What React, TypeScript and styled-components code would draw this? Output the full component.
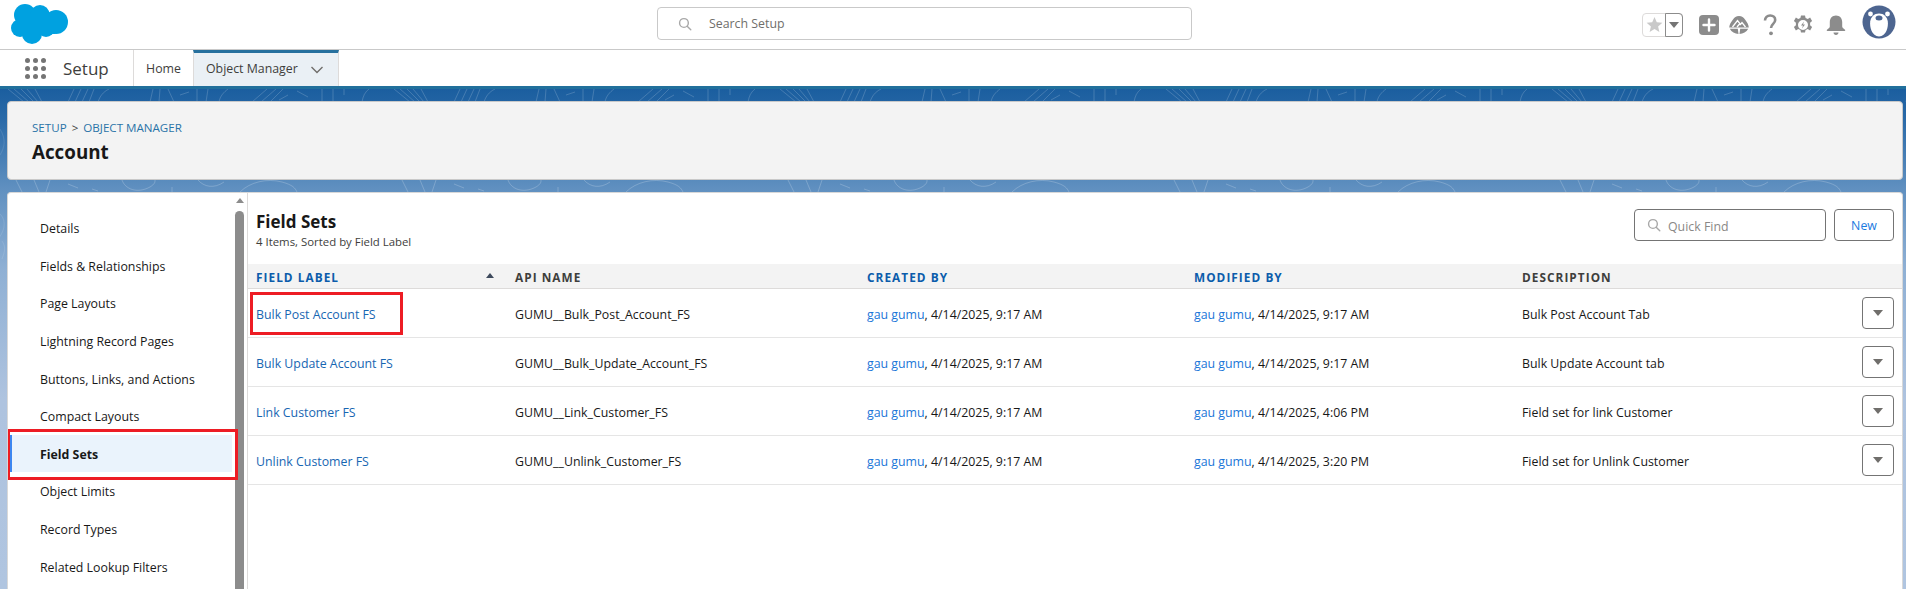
import React from "react";
import styled, { createGlobalStyle } from "styled-components";

const FONT = `"Open Sans", "Noto Sans", "Liberation Sans", sans-serif`;

const Global = createGlobalStyle`
  html, body { margin: 0; padding: 0; height: 100%; overflow: hidden; background: #fff; }
  body { font-family: ${FONT}; font-size: 12.35px; color: #181818; }
  #root { height: 100%; }
  * { box-sizing: border-box; }
`;

const wave = encodeURIComponent(`<svg xmlns="http://www.w3.org/2000/svg" width="386" height="180" fill="none" stroke="#fff" stroke-width="1"><g stroke-opacity=".17"><path d="M8 0l16 13M14 0l15 13M21 0l13 13M27 0l11 13M35 0l7 13M68 13l6-13M75 13l6-13M82 13l6-13M89 13l5-13M98 13c2-6 5-10 11-13"/><path d="M150 13l3-13M159 13l1-13M168 0l6 13M180 6l9-3M197 0v13M208 0l-2 13M219 13c1-6 5-10 9-13M252 13l15-13M261 13l15-13M270 13l13-13M279 11l9-5M297 2l11 6M322 0v13M333 0v13M344 0v6M362 13c1-6 3-10 7-13"/></g><g stroke-opacity=".2"><path d="M16 91l6 12M34 91l5 12M50 91l-4 12M68 95l10 4M92 100l6 2M122 91c3 9 15 14 28 7 5-3 5-5 5-7M172 98v7M198 91c6 7 16 9 26 2M240 103c10-10 27-14 42-10 11 3 13 6 15 10"/></g><g stroke-opacity=".1"><path d="M0 125c8 8 3 20-3 26M0 40c6 10 5 18 0 26"/><path d="M2 170c3-8 4-12 0-18"/></g></svg>`);

const Page = styled.div`
  width: 1906px;
  height: 589px;
  display: flex;
  flex-direction: column;
  overflow: hidden;
`;

const TopBar = styled.header`
  height: 50px;
  flex: none;
  background: #fff;
  border-bottom: 1px solid #c9c9c9;
  display: grid;
  grid-template-columns: 646px 535px 1fr;
  align-items: center;
  padding: 0 10px 0 11px;
`;

const LogoSvg = styled.svg`
  width: 58px;
  height: 41px;
  display: block;
  margin-top: -1px;
`;

const SearchBox = styled.div`
  height: 33px;
  margin-top: -2px;
  border: 1px solid #c9c9c9;
  border-radius: 4px;
  display: flex;
  align-items: center;
  padding-left: 20px;
  gap: 17px;
  color: #706e6b;
  font-size: 12.35px;
  background: #fff;
`;

const Tools = styled.div`
  display: flex;
  justify-content: flex-end;
  align-items: center;
`;

const FavGroup = styled.div`
  width: 41px;
  height: 24px;
  display: flex;
  border: 1px solid #dddbda;
  border-radius: 4px;
  margin-right: 14px;
  overflow: visible;
`;

const FavStar = styled.div`
  width: 22px;
  display: flex;
  align-items: center;
  justify-content: center;
`;

const FavCaret = styled.div`
  flex: 1;
  margin: -1px -1px -1px 0;
  border: 1px solid #8c8c8c;
  border-radius: 0 4px 4px 0;
  display: flex;
  align-items: center;
  justify-content: center;
`;

const ToolIcon = styled.svg<{ $gap?: number }>`
  width: 24px;
  height: 24px;
  display: block;
  margin-right: ${(p) => p.$gap ?? 8}px;
  color: #8c8c8c;
`;

const Avatar = styled.svg`
  width: 34px;
  height: 34px;
  margin-left: 8px;
  margin-top: -5px;
  display: block;
`;

const NavBar = styled.nav`
  height: 36px;
  flex: none;
  background: #fff;
  display: flex;
  align-items: stretch;
`;

const AppLauncher = styled.div`
  width: 134px;
  display: flex;
  align-items: center;
  padding-left: 25px;
  gap: 17px;
  border-right: 1px solid #dddbda;
`;

const Dots = styled.div`
  display: grid;
  grid-template-columns: repeat(3, 5px);
  grid-auto-rows: 5px;
  gap: 3px;
  span { background: #747474; border-radius: 50%; }
`;

const AppName = styled.span`
  font-size: 17px;
  color: #3e3e3c;
  line-height: 1;
`;

const HomeTab = styled.div`
  width: 59px;
  display: flex;
  align-items: center;
  justify-content: center;
  font-size: 12.35px;
  color: #3e3e3c;
`;

const ActiveTab = styled.div`
  width: 146px;
  background: #eaf0f5;
  border-top: 3px solid #26709e;
  border-left: 1px solid #dddbda;
  border-right: 1px solid #dddbda;
  display: flex;
  align-items: center;
  padding: 0 14px 3px 12px;
  justify-content: space-between;
  font-size: 12.35px;
  color: #3e3e3c;
  svg { margin-top: 3px; }
`;

const Stage = styled.main`
  flex: 1;
  min-height: 0;
  display: flex;
  flex-direction: column;
  gap: 12px;
  padding: 12px 3px 0 7px;
  border-top: 3px solid #21709c;
  background:
    url("data:image/svg+xml,${wave}") repeat-x 0 0,
    linear-gradient(180deg, #1b5e9f 0%, #2a6aa8 6%, #6090c0 20%, #8fb0d4 36%, #aec3df 62%, #b0c5e0 100%);
`;

const HeaderCard = styled.section`
  height: 79px;
  flex: none;
  background: #f3f3f3;
  border: 1px solid #c9c9c9;
  border-radius: 4px;
  padding: 18px 24px 0;
`;

const Crumbs = styled.div`
  font-size: 11.6px;
  line-height: 16px;
  color: #3e3e3c;
  display: flex;
  gap: 5px;
`;

const CrumbLink = styled.a`
  color: #2a73a8;
`;

const Title = styled.h1`
  margin: 4px 0 0;
  font-size: 18.8px;
  font-weight: 700;
  line-height: 24px;
  color: #181818;
`;

const Body = styled.section`
  flex: 1;
  min-height: 0;
  display: flex;
  background: #fff;
  border: 1px solid #d8d8d8;
  border-bottom: 0;
  border-radius: 4px 4px 0 0;
  overflow: hidden;
`;

const Side = styled.aside`
  width: 240px;
  flex: none;
  display: flex;
  border-right: 1px solid #dddbda;
  position: relative;
`;

const SideList = styled.ul`
  list-style: none;
  margin: 0;
  padding: 16px 0 0 2px;
  width: 226px;
  flex: none;
`;

const SideItem = styled.li<{ $active?: boolean }>`
  height: 37.6px;
  display: flex;
  align-items: center;
  padding: 2px 0 0 28px;
  margin-right: 2px;
  font-size: 12.35px;
  font-weight: ${(p) => (p.$active ? 700 : 400)};
  color: #181818;
  white-space: nowrap;
  background: ${(p) => (p.$active ? "#eaf3fc" : "transparent")};
  border-left: ${(p) => (p.$active ? "2px solid #3d86f0" : "2px solid transparent")};
  position: relative;
`;

const RedBox = styled.span<{ $w: number; $h: number; $x: number; $y: number }>`
  position: absolute;
  left: ${(p) => p.$x}px;
  top: ${(p) => p.$y}px;
  width: ${(p) => p.$w}px;
  height: ${(p) => p.$h}px;
  border: 3px solid #ed1c24;
  pointer-events: none;
  z-index: 2;
`;

const Scrollbar = styled.div`
  width: 9px;
  margin: 0 0 0 1px;
  flex: none;
  display: flex;
  flex-direction: column;
  align-items: center;
`;

const ScrollUp = styled.div`
  width: 0;
  height: 0;
  margin-top: 5px;
  border-left: 4.5px solid transparent;
  border-right: 4.5px solid transparent;
  border-bottom: 5px solid #8c8c8c;
`;

const ScrollThumb = styled.div`
  margin-top: 8px;
  flex: 1;
  width: 9px;
  background: #8c8c8c;
  border-radius: 5px 5px 0 0;
`;

const Main = styled.div`
  flex: 1;
  min-width: 0;
  display: flex;
  flex-direction: column;
`;

const ListHead = styled.div`
  height: 71px;
  flex: none;
  display: flex;
  justify-content: space-between;
  padding: 16px 8px 0 8px;
`;

const ListTitle = styled.h2`
  margin: 1px 0 0;
  font-size: 17px;
  line-height: 24px;
  font-weight: 700;
  color: #181818;
`;

const ListMeta = styled.div`
  font-size: 11.4px;
  line-height: 16px;
  color: #3e3e3c;
`;

const ListActions = styled.div`
  display: flex;
  gap: 8px;
  height: 32px;
`;

const QuickFind = styled.div`
  width: 192px;
  height: 32px;
  border: 1px solid #747474;
  border-radius: 4px;
  display: flex;
  align-items: center;
  padding-left: 12px;
  gap: 7px;
  font-size: 12.35px;
  color: #8a8886;
  span { padding-top: 2px; }
`;

const NewButton = styled.button`
  width: 60px;
  height: 32px;
  border: 1px solid #747474;
  border-radius: 4px;
  background: #fff;
  font: inherit;
  font-size: 12.35px;
  color: #1b7ae0;
  padding: 0;
`;

const Columns = "259px 352px 327px 328px 1fr 50px";

const HeadRow = styled.div`
  height: 25px;
  flex: none;
  display: grid;
  grid-template-columns: ${Columns};
  align-items: center;
  background: #f3f3f3;
  border-bottom: 1px solid #dddbda;
`;

const HeadCell = styled.div<{ $dark?: boolean; $sorted?: boolean }>`
  padding: 1px ${(p) => (p.$sorted ? 13 : 0)}px 0 8px;
  font-size: 11.8px;
  font-weight: 700;
  letter-spacing: 1.05px;
  color: ${(p) => (p.$dark ? "#3e3e3c" : "#0b5cab")};
  display: flex;
  align-items: center;
  justify-content: space-between;
`;

const SortCaret = styled.i`
  width: 0;
  height: 0;
  margin-top: -2px;
  border-left: 4px solid transparent;
  border-right: 4px solid transparent;
  border-bottom: 5px solid #3e4a5c;
`;

const Row = styled.div`
  height: 49px;
  flex: none;
  display: grid;
  grid-template-columns: ${Columns};
  align-items: center;
  border-bottom: 1px solid #e5e5e5;
  font-size: 12.35px;
`;

const Cell = styled.div`
  padding: 4px 0 0 8px;
  color: #181818;
  line-height: 18px;
  white-space: nowrap;
  position: relative;
`;

const Lnk = styled.a<{ $bright?: boolean }>`
  color: ${(p) => (p.$bright ? "#1b76d8" : "#1766b2")};
`;

const MenuBtn = styled.div`
  width: 32px;
  height: 32px;
  border: 1px solid #747474;
  border-radius: 4px;
  display: flex;
  align-items: center;
  justify-content: center;
  justify-self: end;
  margin-right: 8px;
  &::after {
    content: "";
    border-left: 5px solid transparent;
    border-right: 5px solid transparent;
    border-top: 6px solid #706e6b;
  }
`;

const Search = ({ s = 16, c = "#a8a8a8" }: { s?: number; c?: string }) => (
  <svg width={s} height={s} viewBox="0 0 16 16" fill="none" stroke={c} strokeWidth="1.6">
    <circle cx="6.8" cy="6.8" r="5" />
    <path d="M10.5 10.5 L14.6 14.6" strokeLinecap="round" />
  </svg>
);

const sideItems = [
  "Details",
  "Fields & Relationships",
  "Page Layouts",
  "Lightning Record Pages",
  "Buttons, Links, and Actions",
  "Compact Layouts",
  "Field Sets",
  "Object Limits",
  "Record Types",
  "Related Lookup Filters",
];

const rows = [
  ["Bulk Post Account FS", "GUMU__Bulk_Post_Account_FS", "4/14/2025, 9:17 AM", "4/14/2025, 9:17 AM", "Bulk Post Account Tab"],
  ["Bulk Update Account FS", "GUMU__Bulk_Update_Account_FS", "4/14/2025, 9:17 AM", "4/14/2025, 9:17 AM", "Bulk Update Account tab"],
  ["Link Customer FS", "GUMU__Link_Customer_FS", "4/14/2025, 9:17 AM", "4/14/2025, 4:06 PM", "Field set for link Customer"],
  ["Unlink Customer FS", "GUMU__Unlink_Customer_FS", "4/14/2025, 9:17 AM", "4/14/2025, 3:20 PM", "Field set for Unlink Customer"],
];

export default function App() {
  return (
    <Page>
      <Global />
      <TopBar>
        <LogoSvg viewBox="0 0 58 41" aria-label="Salesforce">
          <g fill="#00a1e0">
            <circle cx="14" cy="11" r="11" />
            <circle cx="29" cy="10.500" r="9.500" />
            <circle cx="45" cy="18" r="12" />
            <circle cx="9" cy="24" r="9" />
            <circle cx="21" cy="30" r="10" />
            <circle cx="35" cy="24.500" r="8.500" />
            <rect x="10" y="10" width="34" height="20" />
          </g>
        </LogoSvg>
        <SearchBox>
          <Search s={14} />
          <span>Search Setup</span>
        </SearchBox>
        <Tools>
          <FavGroup>
            <FavStar>
              <svg width="17" height="17" viewBox="0 0 24 24" fill="#c9c9c9">
                <path d="M12 1.500l3.200 7.300 7.900.7-6 5.200 1.800 7.800L12 18.400l-6.900 4.100 1.800-7.800-6-5.200 7.900-.7z" />
              </svg>
            </FavStar>
            <FavCaret>
              <svg width="10" height="6" viewBox="0 0 10 6" fill="#747474">
                <path d="M0 0h10L5 6z" />
              </svg>
            </FavCaret>
          </FavGroup>
          <ToolIcon viewBox="0 0 24 24" $gap={6}>
            <rect x="2" y="2" width="20" height="20" rx="4" fill="currentColor" />
            <path d="M12 6.500v11M6.500 12h11" stroke="#fff" strokeWidth="2.400" strokeLinecap="round" />
          </ToolIcon>
          <ToolIcon viewBox="0 0 24 24" $gap={8}>
            <path d="M12 3c3 0 4.500 1.500 6 3.500 2 2.500 3.500 5 3.800 8H2.200C2.500 11.500 4 9 6 6.500 7.500 4.500 9 3 12 3z" fill="currentColor" />
            <path d="M2.800 15.800h8l.7 5.200C8 21 4.500 19 2.800 15.800zM21.200 15.800h-8l-.7 5.200c3.500 0 7-2 8.700-5.200z" fill="currentColor" />
            <path d="M5.500 14l5-6.500 3 4 1.500-2 3.500 4.500M10 14l3-3.500" stroke="#fff" strokeWidth="1.300" fill="none" />
          </ToolIcon>
          <ToolIcon viewBox="1 0 24 24" $gap={8}>
            <path d="M7 7.500c0-3 2.200-5 5.200-5s5 2 5 4.500c0 3.800-4.200 4-4.200 8" stroke="currentColor" strokeWidth="2.600" fill="none" />
            <circle cx="13" cy="20.300" r="1.900" fill="currentColor" />
          </ToolIcon>
          <ToolIcon viewBox="0 0 24 24" $gap={9}>
            <path fillRule="evenodd" fill="currentColor" d="M10 2.500h4l.6 2.600 2.200.9 2.300-1.400 2 3.300-2 1.900v2.400l2 1.900-2 3.300-2.300-1.400-2.200.9-.6 2.600h-4l-.6-2.600-2.200-.9-2.300 1.400-2-3.300 2-1.900V9.800l-2-1.900 2-3.300 2.300 1.400 2.200-.9zM12 7a5 5 0 1 0 0 10 5 5 0 0 0 0-10z" />
            <path d="M13 8.500l-3 4h2l-1 3 3-4h-2z" fill="currentColor" />
          </ToolIcon>
          <ToolIcon viewBox="0 0 24 24" $gap={6}>
            <path fill="currentColor" d="M12 2.500c3.700 0 6.200 2.800 6.200 6.500v4.500c0 1.500 1.800 2.300 2.800 3.300.4.400.4 1.200-.4 1.200H3.400c-.8 0-.8-.8-.4-1.200 1-1 2.800-1.800 2.800-3.300V9c0-3.700 2.500-6.500 6.200-6.500zM9.500 19.500h5c0 1.400-1.100 2.500-2.500 2.500s-2.500-1.100-2.500-2.500z" />
          </ToolIcon>
          <Avatar viewBox="0 0 34 34">
            <circle cx="17" cy="17" r="16.500" fill="#4d6590" />
            <circle cx="8.500" cy="9" r="2.400" fill="#fff" />
            <circle cx="25.500" cy="9" r="2.400" fill="#fff" />
            <path d="M17 8.500c5 0 8 3.500 8.800 8 .7 5-1.500 15-8.800 15s-9.500-10-8.800-15c.8-4.500 3.800-8 8.800-8z" fill="#fff" />
            <ellipse cx="17" cy="13" rx="3.500" ry="2.500" fill="#4d6590" />
          </Avatar>
        </Tools>
      </TopBar>

      <NavBar>
        <AppLauncher>
          <Dots>
            {Array.from({ length: 9 }).map((_, i) => (
              <span key={i} />
            ))}
          </Dots>
          <AppName>Setup</AppName>
        </AppLauncher>
        <HomeTab>Home</HomeTab>
        <ActiveTab>
          <span>Object Manager</span>
          <svg width="14" height="8" viewBox="0 0 14 8" fill="none" stroke="#706e6b" strokeWidth="1.400">
            <path d="M1.500 1l5.500 5.500L12.500 1" />
          </svg>
        </ActiveTab>
      </NavBar>

      <Stage>
        <HeaderCard>
          <Crumbs>
            <CrumbLink>SETUP</CrumbLink>
            <span>&gt;</span>
            <CrumbLink>OBJECT MANAGER</CrumbLink>
          </Crumbs>
          <Title>Account</Title>
        </HeaderCard>
        <Body>
          <Side>
            <SideList>
              {sideItems.map((item, i) => (
                <SideItem key={item} $active={i === 6}>
                  {item}
                  {i === 6 && <RedBox $x={-5} $y={-6} $w={231} $h={51} />}
                </SideItem>
              ))}
            </SideList>
            <Scrollbar>
              <ScrollUp />
              <ScrollThumb />
            </Scrollbar>
          </Side>
          <Main>
            <ListHead>
              <div>
                <ListTitle>Field Sets</ListTitle>
                <ListMeta>4 Items, Sorted by Field Label</ListMeta>
              </div>
              <ListActions>
                <QuickFind>
                  <Search s={14} />
                  <span>Quick Find</span>
                </QuickFind>
                <NewButton>New</NewButton>
              </ListActions>
            </ListHead>
            <HeadRow>
              <HeadCell $sorted>FIELD LABEL<SortCaret /></HeadCell>
              <HeadCell $dark>API NAME</HeadCell>
              <HeadCell>CREATED BY</HeadCell>
              <HeadCell>MODIFIED BY</HeadCell>
              <HeadCell $dark>DESCRIPTION</HeadCell>
              <span />
            </HeadRow>
            {rows.map((r, i) => (
              <Row key={r[0]}>
                <Cell>
                  <Lnk>{r[0]}</Lnk>
                  {i === 0 && <RedBox $x={2} $y={-10} $w={153} $h={43} />}
                </Cell>
                <Cell>{r[1]}</Cell>
                <Cell><Lnk $bright>gau gumu</Lnk>, {r[2]}</Cell>
                <Cell><Lnk $bright>gau gumu</Lnk>, {r[3]}</Cell>
                <Cell>{r[4]}</Cell>
                <MenuBtn />
              </Row>
            ))}
          </Main>
        </Body>
      </Stage>
    </Page>
  );
}
